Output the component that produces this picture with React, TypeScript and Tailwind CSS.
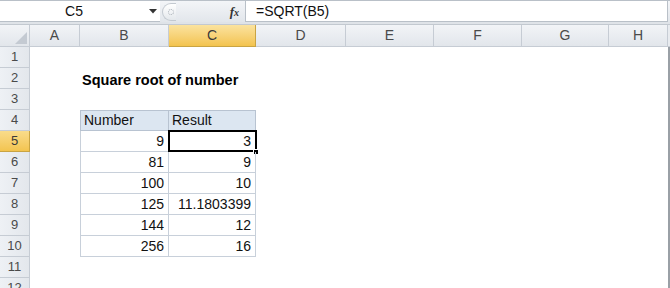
import React from "react";

const COLS = [
  { l: "A", w: 50 },
  { l: "B", w: 89 },
  { l: "C", w: 87 },
  { l: "D", w: 90 },
  { l: "E", w: 88 },
  { l: "F", w: 88 },
  { l: "G", w: 87 },
  { l: "H", w: 59 },
];

const DATA: [string, string][] = [
  ["9", "3"],
  ["81", "9"],
  ["100", "10"],
  ["125", "11.1803399"],
  ["144", "12"],
  ["256", "16"],
];

function RowHeader({ n, sel }: { n: number; sel?: boolean }) {
  return (
    <div
      className={
        "w-[30px] shrink-0 h-[21px] flex items-center justify-center border-r border-b text-[13px] " +
        (sel
          ? "bg-gradient-to-b from-[#f9dc8a] to-[#f3c44f] border-[#c9a443] text-[#3a3a3a]"
          : "bg-gradient-to-r from-[#eef1f5] to-[#e3e7ec] border-[#c6ccd4] text-[#4a4a4a]")
      }
    >
      {n}
    </div>
  );
}

export default function App() {
  return (
    <div
      className="w-[670px] h-[288px] overflow-hidden bg-white relative"
      style={{ fontFamily: '"Liberation Sans", Arial, sans-serif' }}
    >
      {/* Formula bar */}
      <div className="h-[22px] flex border-t border-[#b9c0c8] bg-gradient-to-b from-[#f3f5f8] to-[#e2e6eb]">
        <div className="w-[160px] shrink-0 h-full bg-white border-b border-[#b9c0c8] flex items-center relative">
          <div className="w-[148px] text-center text-[14px] text-[#111]">C5</div>
          <svg width="8" height="5" viewBox="0 0 8 5" className="ml-[1px]">
            <path d="M0 0 H8 L4 4.5 Z" fill="#333" />
          </svg>
        </div>
        <div className="w-[16px] shrink-0 h-full flex items-center">
          <div className="w-[14px] h-[18px] rounded-l-full border border-r-0 border-[#c3c9d0] bg-gradient-to-b from-white to-[#e4e8ec] ml-[2px] flex items-center justify-center">
            <div className="w-[6px] h-[6px] rounded-full border border-dotted border-[#a9b0b8] ml-[3px]" />
          </div>
        </div>
        <div className="w-[69px] shrink-0 h-full flex items-center justify-end pr-[6px]">
          <span
            className="italic font-bold text-[13px] text-[#333] leading-none"
            style={{ fontFamily: '"Liberation Serif", "Times New Roman", serif' }}
          >
            f<span className="text-[10px]">x</span>
          </span>
        </div>
        <div className="flex-1 h-full bg-white border border-t-0 border-[#b9c0c8] flex items-center pl-[10px] text-[14px] text-[#111] mr-[2px]">
          =SQRT(B5)
        </div>
      </div>
      {/* gap */}
      <div className="h-[3px] bg-[#dfe3e8] border-b border-[#c3c9d0]" />
      {/* Column headers */}
      <div className="flex h-[22px]">
        <div className="w-[30px] shrink-0 h-full border-r border-b border-[#c6ccd4] bg-gradient-to-b from-[#f2f4f7] to-[#e2e6eb] relative">
          <svg width="12" height="12" viewBox="0 0 12 12" className="absolute right-[2px] bottom-[2px]">
            <path d="M12 0 V12 H0 Z" fill="#c4cad2" />
          </svg>
        </div>
        {COLS.map((c) => (
          <div
            key={c.l}
            style={{ width: c.w }}
            className={
              "shrink-0 h-full border-r border-b flex items-center justify-center text-[14px] " +
              (c.l === "C"
                ? "bg-gradient-to-b from-[#fbe39e] to-[#f3c34d] border-[#c9a443] text-[#3a3a3a]"
                : "bg-gradient-to-b from-[#f2f4f7] to-[#e2e6eb] border-[#c6ccd4] text-[#4a4a4a]")
            }
          >
            {c.l}
          </div>
        ))}
        <div className="flex-1 h-full border-b border-[#c6ccd4] bg-[#e8ebef]" />
      </div>
      {/* Rows */}
      <div className="flex">
        <div className="flex flex-col">
          {Array.from({ length: 12 }, (_, i) => {
            const n = i + 1;
            const di = n - 5;
            return (
              <div key={n} className="flex h-[21px]">
                <RowHeader n={n} sel={n === 5} />
                <div className="w-[50px] shrink-0" />
                {n === 2 ? (
                  <div className="w-[176px] shrink-0 relative">
                    <span className="absolute left-[2px] top-[2px] whitespace-nowrap font-bold text-[14.5px] text-black">
                      Square root of number
                    </span>
                  </div>
                ) : n === 4 ? (
                  <>
                    <div className="w-[89px] shrink-0 bg-[#dce6f1] border border-[#b8c3d1] flex items-center pl-[3px] text-[14px] text-[#111]">
                      Number
                    </div>
                    <div className="w-[87px] shrink-0 bg-[#dce6f1] border border-l-0 border-[#b8c3d1] flex items-center pl-[3px] text-[14px] text-[#111]">
                      Result
                    </div>
                  </>
                ) : n >= 5 && n <= 10 ? (
                  <>
                    <div className="w-[89px] shrink-0 border-l border-r border-b border-[#c8d0da] flex items-center justify-end pr-[4px] text-[14px] text-[#111]">
                      {DATA[di][0]}
                    </div>
                    <div className="w-[87px] shrink-0 border-r border-b border-[#c8d0da] flex items-center justify-end pr-[4px] text-[14px] text-[#111] relative">
                      {DATA[di][1]}
                      {n === 5 && (
                        <>
                          <div className="absolute left-[-1px] top-[-1px] right-[-2px] bottom-[-1px] border-2 border-black" />
                          <div className="absolute right-[-4px] bottom-[-4px] w-[6px] h-[6px] bg-black border border-white" />
                        </>
                      )}
                    </div>
                  </>
                ) : (
                  <div className="w-[176px] shrink-0" />
                )}
              </div>
            );
          })}
        </div>
        <div className="flex-1" />
        <div className="w-[2px] h-[252px] bg-[#9aa0a6]" />
      </div>
    </div>
  );
}
